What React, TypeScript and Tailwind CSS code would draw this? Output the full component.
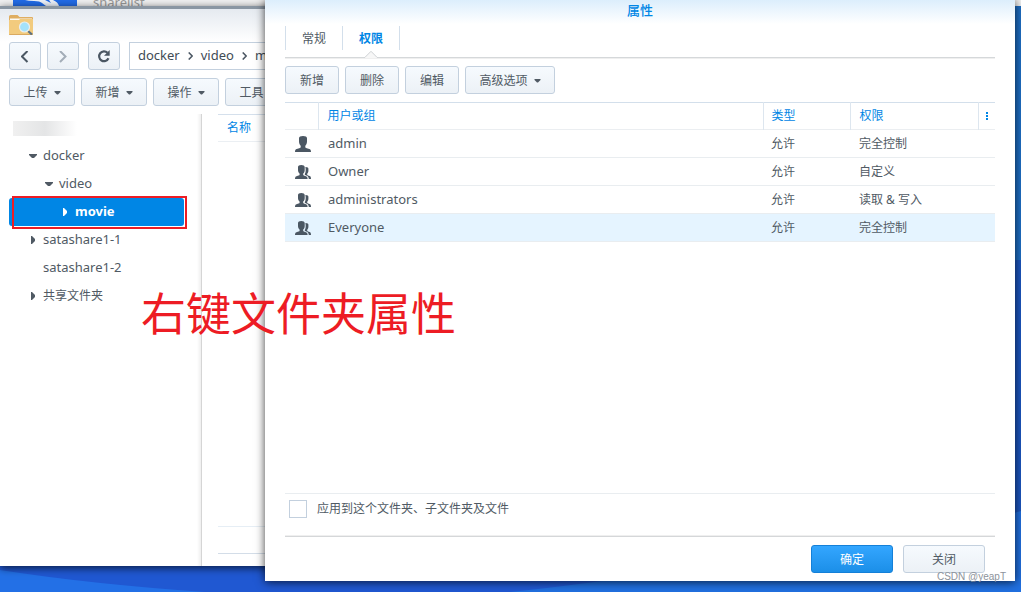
import { useState, type ReactNode } from 'react';

const buttonStyle =
  'flex h-7 items-center justify-center rounded-[3px] border border-[#c3d0de] bg-gradient-to-b from-[#f6fafe] to-[#ecf1f6] pt-[2px] text-[12px] text-[#505a64]';

const tree = [
  { name: 'docker', indent: 'pl-5', arrow: 'down' },
  { name: 'video', indent: 'pl-9', arrow: 'down' },
  { name: 'movie', indent: 'pl-[52px]', arrow: 'right', selected: true },
  { name: 'satashare1-1', indent: 'pl-5', arrow: 'right' },
  { name: 'satashare1-2', indent: 'pl-5', arrow: 'none' },
  { name: '共享文件夹', indent: 'pl-5', arrow: 'right', cjk: true },
];

const permissions = [
  { name: 'admin', type: '允许', access: '完全控制', group: false },
  { name: 'Owner', type: '允许', access: '自定义', group: true },
  { name: 'administrators', type: '允许', access: '读取 & 写入', group: true },
  { name: 'Everyone', type: '允许', access: '完全控制', group: true },
];

const CaretDown = () => (
  <svg className="h-1 w-[7px]" viewBox="0 0 7 4" fill="currentColor" aria-hidden="true">
    <path d="M.5 0h6v1L4 3.400H3L.5 1z" />
  </svg>
);

const TreeArrow = ({ kind }: { kind: string }) => (
  <svg className="h-2 w-2 shrink-0" viewBox="0 0 8 8" fill="currentColor" aria-hidden="true">
    {kind === 'down' && <path d="M0 2h8v1L5 6H3L0 3z" />}
    {kind === 'right' && <path d="M2 0h1l3 3v2L3 8H2z" />}
  </svg>
);

const UserIcon = () => (
  <svg className="h-4 w-4" viewBox="0 0 16 16" fill="#4b5763" aria-hidden="true">
    <path d="M4 2.200C4 .8 5.500 0 8 0s4 .8 4 2.200v3.200c0 1.900-.8 3.300-1.700 4.300v1.200c0 .7.500.9 1.500 1.300l2.500.7c1.200.4 1.700 1.100 1.700 3.100H0c0-2 .5-2.700 1.700-3.100l2.500-.7c1-.4 1.500-.6 1.500-1.300V9.700C4.800 8.700 4 7.300 4 5.400z" />
  </svg>
);

const GroupIcon = () => (
  <svg className="h-4 w-4" viewBox="0 0 16 16" fill="#4b5763" aria-hidden="true">
    <path d="M3 3C3 1.700 4.300 1 6.300 1s3.400.7 3.400 2.100v2.800c0 1.600-.7 2.900-1.500 3.700v1c0 .6.500.8 1.300 1.100l1.500.6c1.200.5 1.600 1.300 1.600 2.700H0c0-1.700.4-2.400 1.500-2.800l1.900-.7c.8-.3 1.200-.5 1.200-1.100v-.9C3.700 8.700 3 7.500 3 5.900z" />
    <path d="M10.400 2.900c1.900-.1 3 .6 3 1.900v1.900c0 1.300-.6 2.300-1.200 3v.8c0 .6.300.8.900 1l1.500.6c1 .4 1.400 1 1.400 2.900h-2.200c-.1-1.700-.7-2.700-2-3.300l-1.700-.8c-.5-.3-.5-.7-.2-1.200.8-1.300 1.100-3.600.5-6.800z" />
  </svg>
);

const FolderIcon = () => (
  <svg className="h-5 w-6" viewBox="0 0 24 20" aria-hidden="true">
    <path d="M0 1.500Q0 0 1.500 0h7l2 2H23q1 0 1 1v4H0z" fill="#dfae62" />
    <path d="M1 3.500h22V5H1z" fill="#fdfaf3" />
    <path d="M0 5h10l1-1h13v15q0 1-1 1H1q-1 0-1-1z" fill="#f2cb7e" />
    <path d="M0 19h24q0 1-1 1H1q-1 0-1-1z" fill="#d9a960" />
    <path d="M19 16l4 3.500" stroke="#5d7181" strokeWidth="2.200" />
    <circle cx="15.500" cy="12" r="5" fill="#a4e2fb" stroke="#e9eef0" strokeWidth="1.200" />
  </svg>
);

const Crumb = ({ children }: { children: ReactNode }) => (
  <a href="#path" className="text-[13px] text-[#414b55]">
    {children}
  </a>
);

const Chevron = () => (
  <svg className="h-2 w-[5px] shrink-0" viewBox="0 0 5 8" fill="none" stroke="#4b5763" strokeWidth="1.600" aria-hidden="true">
    <path d="M.7.5L4.200 4 .7 7.500" />
  </svg>
);

const Wallpaper = () => (
  <svg className="absolute inset-0 h-full w-full" viewBox="0 0 1021 592" preserveAspectRatio="none" aria-hidden="true">
    <rect width="1021" height="592" fill="#2058d2" />
    <path d="M0 570Q90 584 205 592H0z" fill="#2370e6" />
    <path d="M510 592Q700 572 1021 510v82z" fill="#2170e0" />
    <path d="M1010 0h11v511l-11 3z" fill="#1e6fc6" />
    <path d="M1010 260h11v251l-11 3z" fill="#1c56c0" />
  </svg>
);

const FileStation = () => (
  <section className="absolute top-[6px] right-10 bottom-[26px] left-0 flex flex-col border-t-[3px] border-[#8a96a2] bg-white shadow-[0_2px_8px_rgba(0,0,0,0.7)]">
    <header className="bg-gradient-to-b from-[#e5eaf0] to-white px-[9px] pt-[6px] pb-[7px]">
      <FolderIcon />
    </header>
    <div className="flex h-7 pl-[9px]">
      <button aria-label="Back" className={`${buttonStyle} w-8`}>
        <svg className="h-3 w-2" viewBox="0 0 8 12" fill="none" stroke="#4b5763" strokeWidth="2">
          <path d="M6.500 0L1 5.500 6.500 11" />
        </svg>
      </button>
      <button aria-label="Forward" className={`${buttonStyle} ml-[6px] w-8`}>
        <svg className="h-3 w-2" viewBox="0 0 8 12" fill="none" stroke="#a3adb8" strokeWidth="2">
          <path d="M1 0l5.500 5.500L1 11" />
        </svg>
      </button>
      <button aria-label="Refresh" className={`${buttonStyle} ml-[9px] w-8`}>
        <svg className="h-[14px] w-[14px]" viewBox="0 0 14 14" fill="none" stroke="#4b5763" strokeWidth="2.200">
          <path d="M10.500 2.800A4.900 4.900 0 1 0 11.500 8.300" />
          <path d="M12.700 0v5.700H7z" fill="#4b5763" stroke="none" />
        </svg>
      </button>
      <nav className="ml-[9px] flex flex-1 items-center gap-2 border border-[#c3d0de] bg-white pl-2">
        <Crumb>docker</Crumb>
        <Chevron />
        <Crumb>video</Crumb>
        <Chevron />
        <Crumb>movie</Crumb>
      </nav>
    </div>
    <div className="mt-2 flex gap-[6px] pl-[9px]">
      {['上传', '新增', '操作', '工具'].map((label) => (
        <button key={label} className={`${buttonStyle} w-[66px] gap-[6px]`}>
          {label}
          <CaretDown />
        </button>
      ))}
    </div>
    <div className="mt-2 flex flex-1">
      <aside className="w-[202px] border-r border-[#d5d5d5] bg-gradient-to-r from-white from-98% to-[#efefef] pr-[17px] pl-[9px]">
        <div className="flex h-7 items-center pl-1">
          <div className="h-[15px] w-16 bg-gradient-to-r from-[#f0f0f0] via-[#e4e5e6] to-white" />
        </div>
        <ul>
          {tree.map((node) => (
            <li key={node.name} className="relative">
              <button
                className={`flex h-7 w-full items-center gap-[6px] rounded-[3px] ${node.indent} ${node.cjk ? 'text-[12px]' : 'text-[13px]'} ${
                  node.selected ? 'bg-[#0086e5] font-bold text-white' : 'text-[#505a64]'
                }`}
              >
                <TreeArrow kind={node.arrow} />
                {node.name}
              </button>
              {node.selected && (
                <span className="pointer-events-none absolute -top-[2px] -right-[3px] -bottom-[3px] left-[3px] border-2 border-[#ed1c24]" />
              )}
            </li>
          ))}
        </ul>
      </aside>
      <div className="flex flex-1 flex-col pl-4">
        <div className="flex h-7 items-center border-t border-b border-t-[#d5e0ec] border-b-[#ebeff3] pl-[9px] text-[12px] text-[#0086e5]">
          名称
        </div>
        <div className="flex-1" />
        <div className="mb-3 h-7 border-t border-b border-t-[#e6eef5] border-b-[#d3dde8]" />
      </div>
    </div>
  </section>
);

const PropertiesDialog = () => {
  const [applyAll, setApplyAll] = useState(false);

  return (
    <section className="absolute top-0 right-[6px] bottom-[11px] left-[265px] flex flex-col bg-white bg-gradient-to-b from-[#dceefc] to-white to-[24px] px-5 shadow-[0_1px_9px_rgba(0,0,0,0.75)]">
      <h1 className="h-[26px] text-center text-[13px] leading-5 font-medium text-[#0086e5]">属性</h1>

      {/* Tabs */}
      <div className="relative h-8 border-b border-[#d5d8da] shadow-[0_1px_0_#efefef]">
        <div className="flex h-6 divide-x divide-[#d3dfeb] border-l border-[#d3dfeb] text-[12px]">
          <button className="w-[57px] pt-[2px] text-[#505a64]">常规</button>
          <button className="w-[57px] pt-[2px] font-bold text-[#0086e5]">权限</button>
          <span />
        </div>
        <svg className="absolute -bottom-px left-[79px] h-2 w-[14px]" viewBox="0 0 14 8" aria-hidden="true">
          <path d="M0 8L7 1l7 7z" fill="#f7f7f7" />
          <path d="M0 7.500h.8L7 1.300l6.200 6.200h.8" fill="none" stroke="#cfd2d5" />
        </svg>
      </div>

      <div className="mt-2 flex gap-[6px]">
        <button className={`${buttonStyle} w-[54px]`}>新增</button>
        <button className={`${buttonStyle} w-[54px]`}>删除</button>
        <button className={`${buttonStyle} w-[54px]`}>编辑</button>
        <button className={`${buttonStyle} w-[90px] gap-[6px]`}>
          高级选项
          <CaretDown />
        </button>
      </div>

      <table className="mt-2 w-full table-fixed border-collapse text-left text-[12px] text-[#505a64]">
        <thead className="border-t border-b border-t-[#d3dfeb] border-b-[#ebeef1] text-[#0086e5]">
          <tr className="h-[27px] divide-x divide-[#dde6ef]">
            <th className="w-[33px]" aria-label="Icon" />
            <th className="pl-[9px] font-normal">用户或组</th>
            <th className="w-[87px] pl-2 font-normal">类型</th>
            <th className="w-32 pl-[9px] font-normal">权限</th>
            <th className="w-[17px]" aria-label="Columns">
              <svg className="mx-auto h-2 w-[2px]" viewBox="0 0 2 8" fill="#0086e5">
                <path d="M0 0h2v2H0zM0 3h2v2H0zM0 6h2v2H0z" />
              </svg>
            </th>
          </tr>
        </thead>
        <tbody>
          {permissions.map((row) => (
            <tr key={row.name} className={`h-7 border-b border-[#e9edf0] ${row.name === 'Everyone' ? 'bg-[#e5f4ff]' : ''}`}>
              <td className="pl-[10px]">{row.group ? <GroupIcon /> : <UserIcon />}</td>
              <td className="pl-[10px] text-[13px]">{row.name}</td>
              <td className="pl-2">{row.type}</td>
              <td className="pl-[9px]" colSpan={2}>
                {row.access}
              </td>
            </tr>
          ))}
        </tbody>
      </table>

      <div className="flex-1" />

      <div className="flex h-[43px] border-t border-[#e9edf0] pt-[6px] pl-1">
        <label className="flex h-[18px] items-center gap-[10px] text-[12px] text-[#505a64]">
          <input
            type="checkbox"
            checked={applyAll}
            onChange={(e) => setApplyAll(e.target.checked)}
            className="h-[18px] w-[18px] appearance-none border border-[#c3d0de] bg-white checked:bg-[#0086e5]"
          />
          应用到这个文件夹、子文件夹及文件
        </label>
      </div>

      <footer className="flex justify-end gap-[10px] border-t border-[#d5d7d9] pt-2 pr-[10px] pb-2 shadow-[0_-1px_0_#efefef]">
        <button className="h-7 w-[82px] rounded-[3px] border border-[#1480d8] bg-gradient-to-b from-[#33a6ff] to-[#1b8fe8] pt-[2px] text-[12px] text-white">
          确定
        </button>
        <button className={`${buttonStyle} w-[82px]`}>关闭</button>
      </footer>
    </section>
  );
};

const App = () => {
  return (
    <main className="relative min-h-screen overflow-hidden font-['Noto_Sans','Noto_Sans_CJK_SC',sans-serif]">
      <Wallpaper />

      {/* Browser page peeking out behind the windows */}
      <div className="absolute top-0 left-0 flex h-[6px] w-full bg-[#f1f1f1] pl-[13px]">
        <svg className="h-[6px] w-16 shrink-0" viewBox="0 0 64 6" aria-hidden="true">
          <rect width="64" height="6" fill="#226ce8" />
          <path d="M12 0q3 1 9 1t8 2l4 3h13q-1-4-6-6h-4l2 3-6-3z" fill="#eef3fb" />
        </svg>
        <span className="-mt-2 ml-4 text-[13px] leading-5 text-[#9a9a9a]">sharelist</span>
      </div>

      <FileStation />
      <PropertiesDialog />

      {/* Annotation over both windows */}
      <p className="absolute top-[282px] left-[141px] text-[45px] leading-[64px] text-[#ed1c24]">右键文件夹属性</p>
      <p className="absolute right-[15px] bottom-[7px] font-['Liberation_Sans',sans-serif] text-[10px] leading-4 text-[#8d939b]">
        CSDN @yeapT
      </p>
    </main>
  );
};

export default App;
